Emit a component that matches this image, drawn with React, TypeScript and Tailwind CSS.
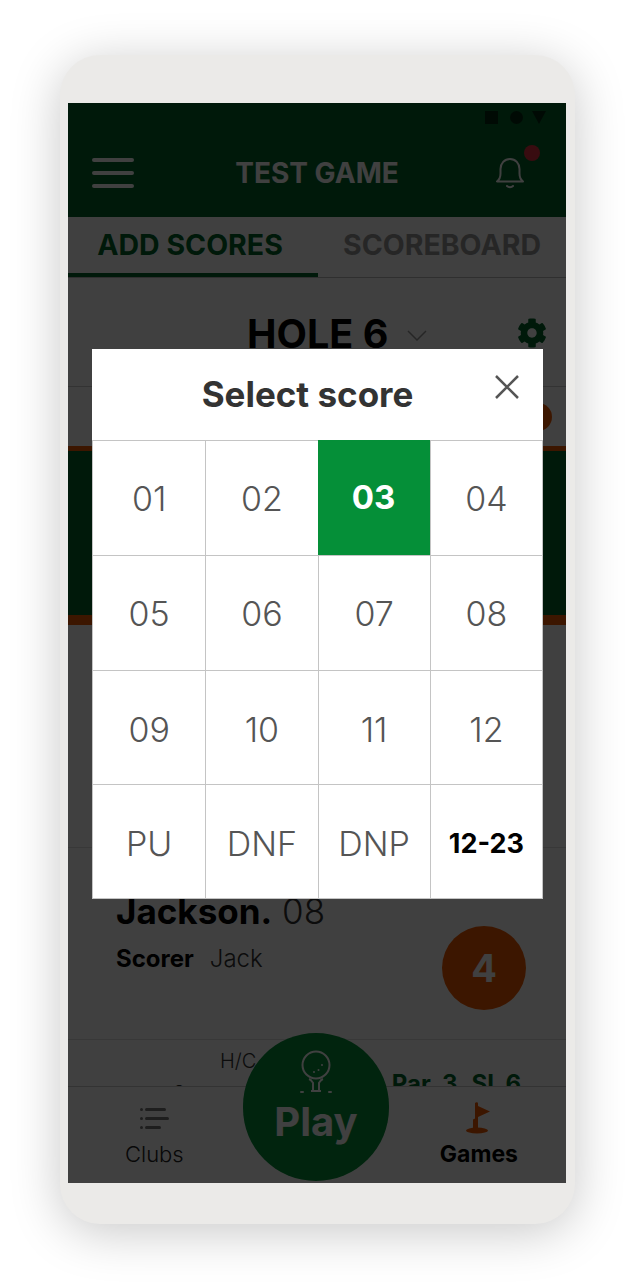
import React from "react";
import { FaCog } from "react-icons/fa";

const SCORES = ["01", "02", "03", "04", "05", "06", "07", "08", "09", "10", "11", "12", "PU", "DNF", "DNP", "12-23"];

const BellIcon = () => (
  <svg width="30" height="32" viewBox="0 0 30 32" fill="none" stroke="#ffffff" strokeWidth="2" strokeLinecap="round" strokeLinejoin="round">
    <path d="M2 24.500h26c-2.500-2-3.500-4-3.500-8v-4.500C24.500 6.500 20.500 2 15 2S5.500 6.500 5.500 12v4.500c0 4-1 6-3.500 8Z" />
    <path d="M12 29c1.500 1.500 4.500 1.500 6 0" />
  </svg>
);

const TeeIcon = () => (
  <svg width="32" height="44" viewBox="0 0 32 44" fill="none" stroke="#ffffff" strokeWidth="2">
    <circle cx="16" cy="15" r="13.500" />
    <path d="M9 29c3 1 3 3 4 4v7M23 29c-3 1-3 3-4 4v7M11 41h10" />
    <path d="M1 42h2M29 42h2" strokeLinecap="round" />
    <circle cx="22" cy="15" r="1" fill="#ffffff" stroke="none" />
    <circle cx="18.500" cy="20" r="1" fill="#ffffff" stroke="none" />
    <circle cx="14" cy="22" r="1" fill="#ffffff" stroke="none" />
  </svg>
);

const ClubsIcon = () => (
  <svg width="29" height="22" viewBox="0 0 29 22" fill="#777777">
    <rect x="0" y="0" width="3" height="3" rx="1.500" />
    <rect x="5" y="0" width="21" height="3" rx="1.500" />
    <rect x="0" y="9" width="3" height="3" rx="1.500" />
    <rect x="5" y="9" width="24" height="3" rx="1.500" />
    <rect x="0" y="18" width="3" height="3" rx="1.500" />
    <rect x="5" y="18" width="16" height="3" rx="1.500" />
  </svg>
);

const FlagIcon = () => (
  <svg width="26" height="32" viewBox="0 0 26 32" fill="#f05a00">
    <path d="M9 1c1-1 3-1 3 .500v2.500L24 9.500 12 15v12H9Z" />
    <path d="M12 15 7 17.500V27h2Z" />
    <ellipse cx="11" cy="28.500" rx="11" ry="3" />
  </svg>
);

const ScoreCell: React.FC<{ label: string; index: number }> = ({ label, index }) => {
  const selected = label === "03";
  const range = label === "12-23";
  const row = Math.floor(index / 4);
  const nudge = row === 1 ? "pt-[1px]" : row === 2 ? "pt-[4px]" : row === 3 ? "pt-[5px]" : "";
  return (
    <div
      className={`flex items-center justify-center border-[#c4c4c4] ${nudge} ${index % 4 !== 0 ? "border-l" : ""} ${row > 0 ? "border-t" : ""} ${
        selected
          ? "bg-[#058f38] border-l-0 -mt-px text-white font-bold text-[33px]"
          : range
            ? "text-black font-bold text-[27px]"
            : "text-[#555555] font-[350] text-[34px]"
      }`}
    >
      {label}
    </div>
  );
};

export default function App() {
  return (
    <div className="w-[635px] h-[1288px] bg-white overflow-hidden pl-[60px] pt-[55px] font-['Inter',sans-serif]">
      <div className="w-[515px] h-[1169px] bg-[#ebeae8] rounded-[40px] pt-[48px] pl-[8px] shadow-[0_8px_50px_rgba(0,0,0,0.22)]">
        <div className="relative w-[498px] h-[1080px] bg-white overflow-hidden flex flex-col">
          {/* Status bar + header */}
          <div className="bg-[#00652a] h-[114px] shrink-0 flex flex-col">
            <div className="h-[33px] flex items-center justify-end gap-[12px] pr-[20px] pb-[4px]">
              <div className="w-[13px] h-[13px] bg-black/60" />
              <div className="w-[13px] h-[13px] rounded-full bg-black/60" />
              <div className="-ml-[3px] w-0 h-0 border-l-[7px] border-r-[7px] border-t-[13px] border-l-transparent border-r-transparent border-t-black/60" />
            </div>
            <div className="flex-1 flex items-center justify-between pl-[24px] pr-[41px] pb-[8px]">
              <div className="flex flex-col gap-[9px] w-[42px]">
                <div className="h-[4px] rounded bg-white" />
                <div className="h-[4px] rounded bg-white" />
                <div className="h-[4px] rounded bg-white" />
              </div>
              <div className="text-white font-bold text-[28px] pl-[5px]">TEST GAME</div>
              <div className="relative">
                <BellIcon />
                <div className="absolute -top-[12px] -right-[15px] w-[16px] h-[16px] rounded-full bg-[#e03040]" />
              </div>
            </div>
          </div>

          {/* Tabs */}
          <div className="h-[61px] shrink-0 flex border-b border-[#bbbbbb]">
            <div className="w-[250px] flex items-center justify-center text-[#00652a] font-bold text-[28.500px] border-b-[4px] border-[#00652a] pr-[6px]">
              ADD SCORES
            </div>
            <div className="flex-1 flex items-center justify-center text-[#999999] font-bold text-[28.500px] pb-[3px]">SCOREBOARD</div>
          </div>

          {/* Hole row */}
          <div className="relative h-[109px] shrink-0 flex items-center border-b border-[#cccccc] pl-[179px] pt-[6px] gap-[19px]">
            <div className="text-black font-bold text-[39.500px]">HOLE 6</div>
            <svg width="20" height="11" viewBox="0 0 20 11" fill="none" stroke="#999999" strokeWidth="1.500">
              <path d="M1 1l9 9 9-9" />
            </svg>
            <FaCog size={30} className="absolute right-[19px] top-[40px] text-[#00652a]" />
          </div>

          {/* Score summary */}
          <div className="h-[59px] shrink-0 flex justify-end items-center pr-[14px]">
            <div className="w-[28px] h-[28px] rounded-full bg-[#f05a00]" />
          </div>

          {/* Green band */}
          <div className="h-[179px] shrink-0 bg-[#00652a] border-t-[5px] border-b-[10px] border-[#f05a00]" />

          {/* Player rows */}
          <div className="h-[223px] shrink-0 border-b border-[#dddddd]" />
          <div className="h-[192px] shrink-0 border-b border-[#dddddd] flex justify-between pl-[48px] pr-[40px] pt-[43px]">
            <div className="flex flex-col">
              <div className="text-[35px] leading-[40px] text-[#333333] font-light">
                <span className="font-bold text-black">Jackson.</span> 08
              </div>
              <div className="mt-[14px] text-[24px] leading-[28px] text-[#333333] font-light">
                <span className="font-bold text-black">Scorer</span>
                <span className="ml-[16px]">Jack</span>
              </div>
            </div>
            <div className="mt-[35px] w-[84px] h-[84px] rounded-full bg-[#f05a00] flex items-center justify-center text-white font-bold text-[38px]">
              4
            </div>
          </div>
          <div className="flex-1 min-h-0 overflow-hidden relative pl-[152px] pt-[6px]">
            <div className="text-[20px] text-[#333333] font-light">H/C</div>
            <div className="absolute left-[105px] top-[38px] text-[20px] text-[#333333]">8</div>
            <div className="absolute right-[45px] top-[26px] text-[#00652a] font-bold text-[24px] flex gap-[14px]">
              <span>Par&nbsp; 3</span>
              <span>SI&nbsp; 6</span>
            </div>
          </div>

          {/* Bottom nav */}
          <div className="h-[97px] shrink-0 bg-white border-t border-[#cccccc] flex justify-between pl-[57px] pr-[48px] pt-[21px]">
            <div className="flex flex-col items-center gap-[10px]">
              <ClubsIcon />
              <div className="text-[22px] leading-[28px] text-[#222222] font-light">Clubs</div>
            </div>
            <div className="flex flex-col items-center gap-[6px] -mt-[6px]">
              <FlagIcon />
              <div className="text-[23px] leading-[28px] font-bold text-black">Games</div>
            </div>
          </div>

          {/* Play button */}
          <div className="absolute left-[175px] top-[930px] w-[146px] h-[148px] rounded-full bg-[#058f38] flex flex-col items-center pt-[17px]">
            <TeeIcon />
            <div className="text-white font-bold text-[40px] leading-[44px] mt-[6px]">Play</div>
          </div>

          {/* Dim overlay */}
          <div className="absolute inset-0 bg-black/75" />

          {/* Modal */}
          <div className="absolute left-[24px] top-[246px] w-[451px] h-[550px] bg-white flex flex-col">
            <div className="relative h-[91px] shrink-0 flex items-center justify-center pr-[20px]">
              <div className="text-[#333333] font-bold text-[35px]">Select score</div>
              <svg className="absolute right-[24px] top-[26px]" width="24" height="24" viewBox="0 0 24 24" stroke="#555555" strokeWidth="2.500">
                <path d="M1 1l22 22M23 1L1 23" />
              </svg>
            </div>
            <div className="flex-1 grid grid-cols-4 grid-rows-4 border border-[#c4c4c4]">
              {SCORES.map((label, i) => (
                <ScoreCell key={label} label={label} index={i} />
              ))}
            </div>
          </div>
        </div>
      </div>
    </div>
  );
}
